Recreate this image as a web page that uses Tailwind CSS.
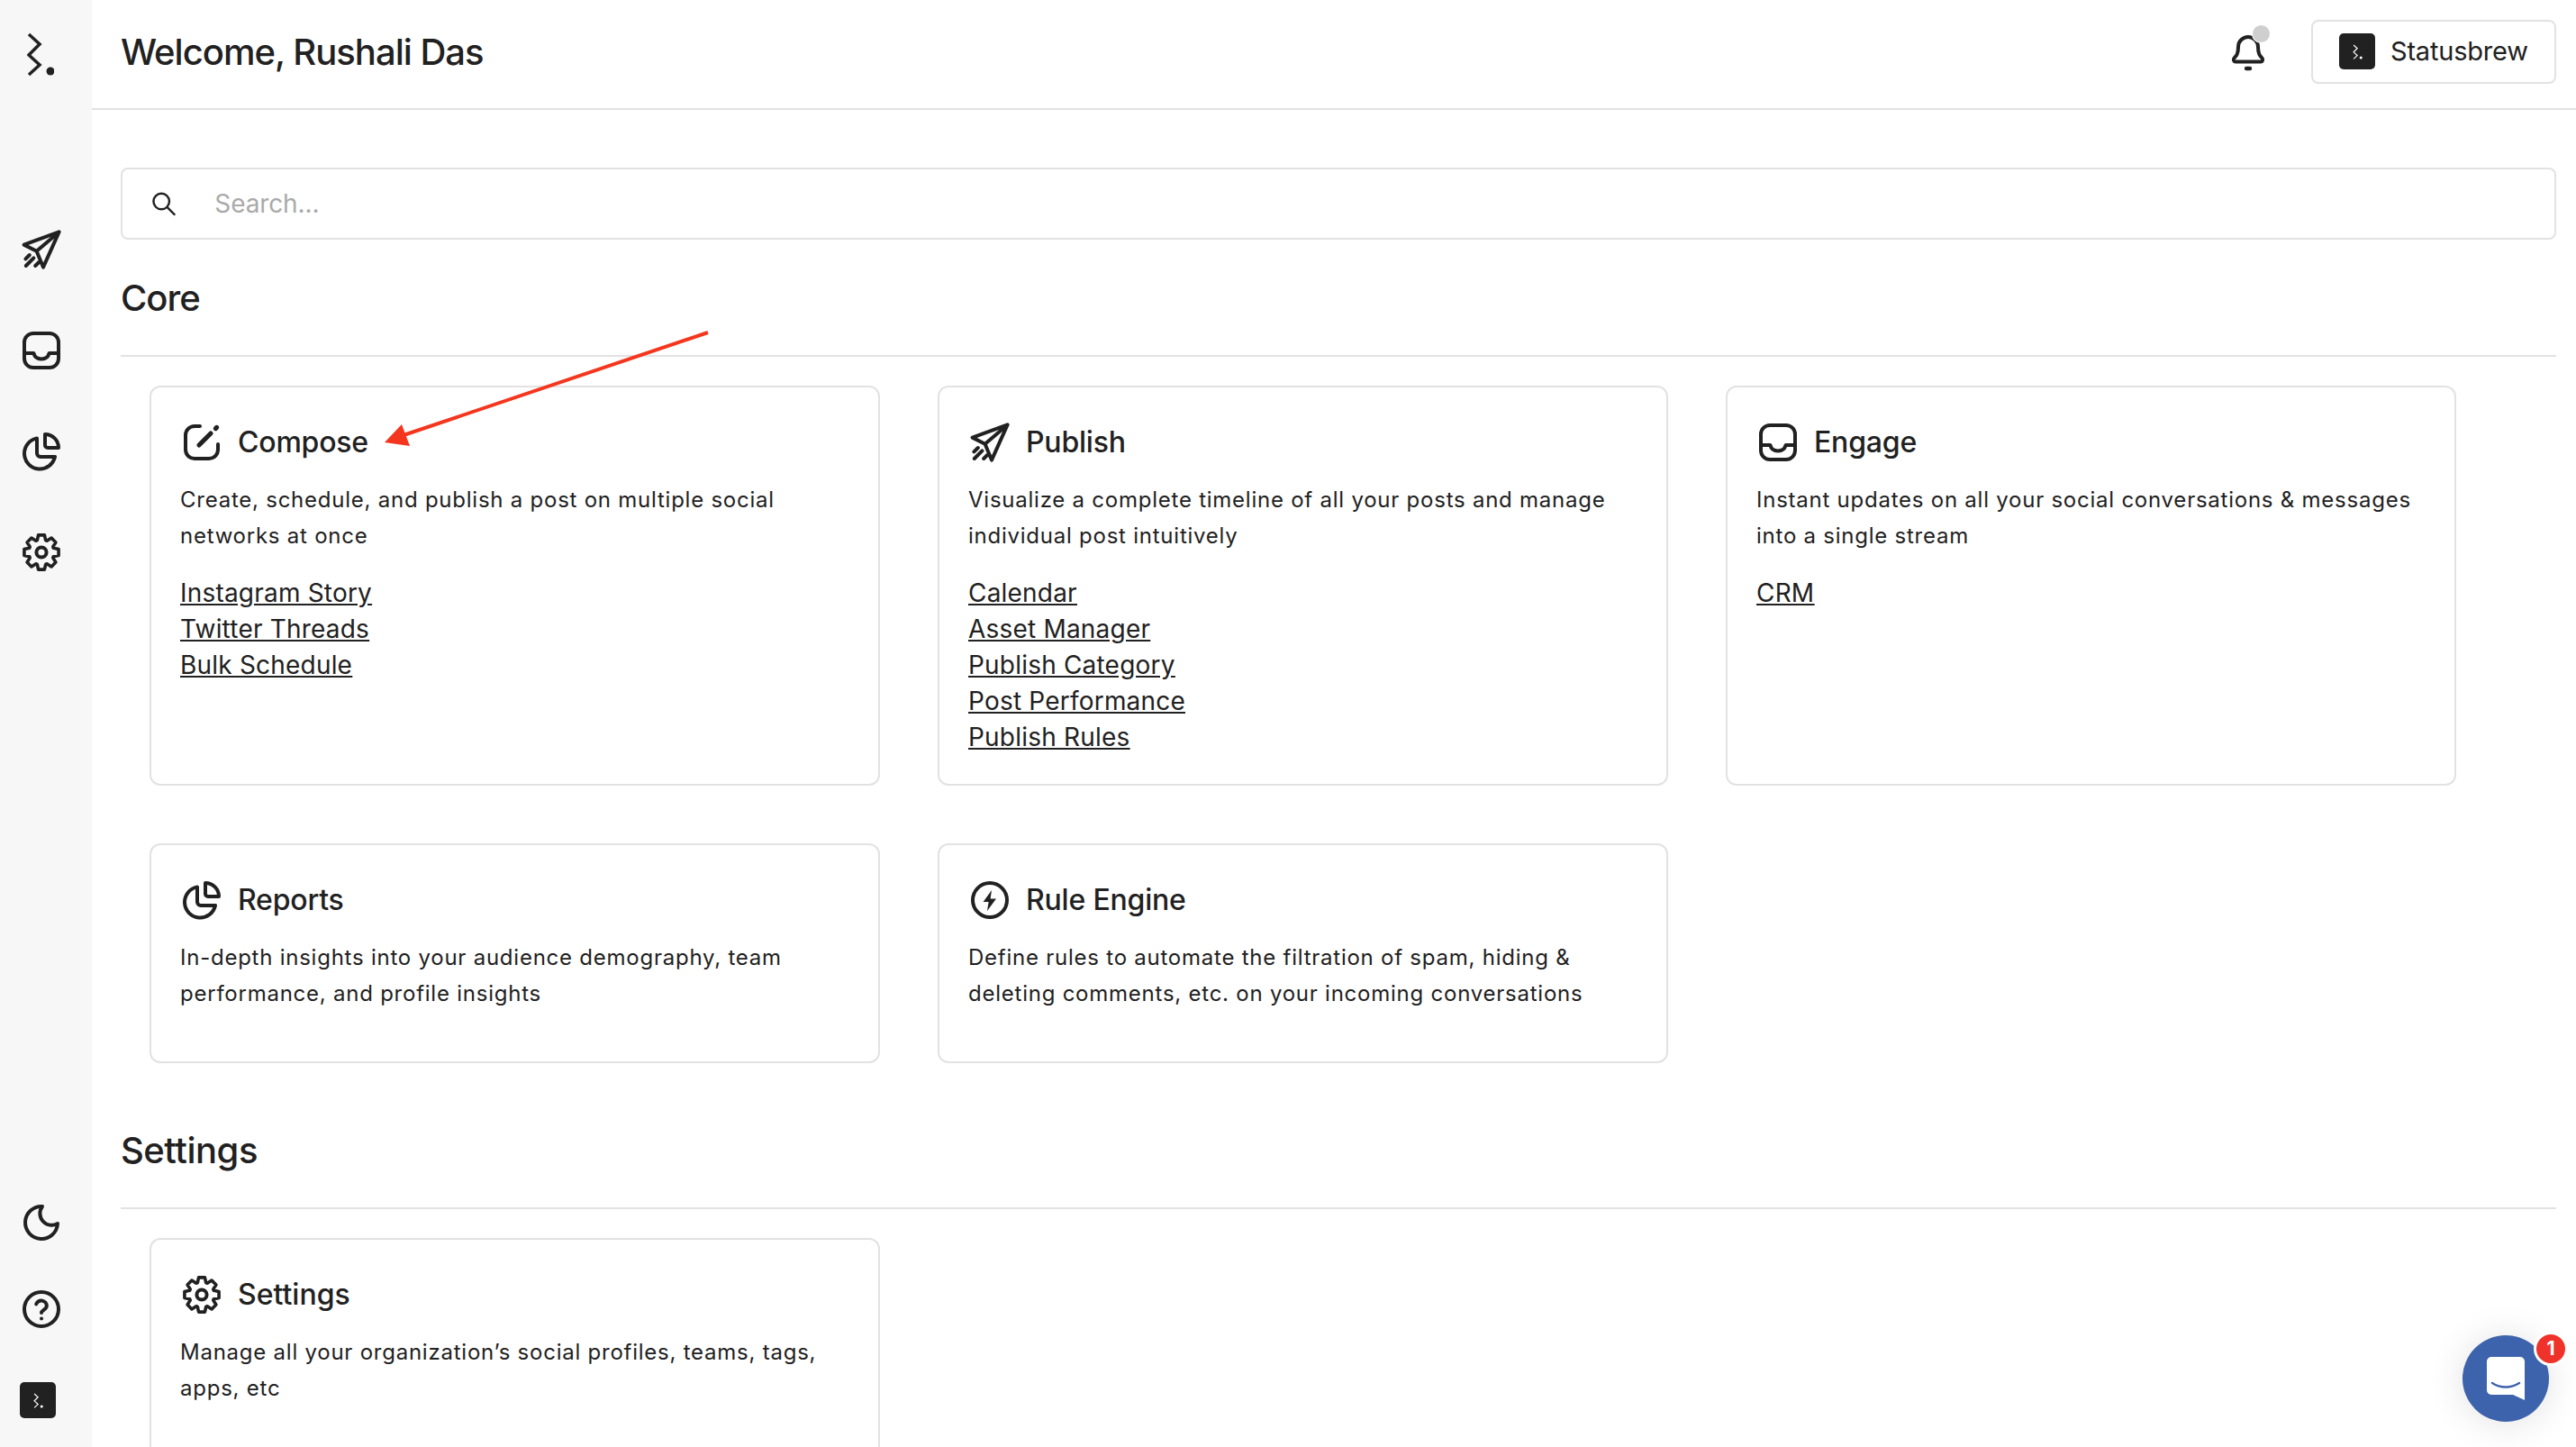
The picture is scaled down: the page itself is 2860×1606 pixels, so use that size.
<!DOCTYPE html>
<html lang="en">
<head>
    <meta charset="UTF-8">
    <title>Statusbrew | Home</title>
    <script src="https://cdn.jsdelivr.net/npm/@tailwindcss/browser@4"></script>
</head>
<body class="h-screen overflow-hidden bg-white font-['Inter',sans-serif] text-[#212121]">
    <!-- icon sheet -->
    <svg class="hidden">
        <defs>
            <symbol id="i-plane" viewBox="0 0 24 24"><path d="M21.8 2.2 2.3 9.3l7 3.6 3.7 8.9z M21.8 2.2 9.3 12.9 M3.2 17.2l2.2-2.2 M3.4 21l4.3-4.3 M8.6 21l2-2"/></symbol>
            <symbol id="i-inbox" viewBox="0 0 24 24"><rect x="2.5" y="2.5" width="19" height="19" rx="5"/><path d="M2.5 13.5h5.2c.5 2.2 2 3.2 4.3 3.2s3.800-1 4.300-3.200h5.200"/></symbol>
            <symbol id="i-pie" viewBox="0 0 24 24"><path d="M9.500 4.700a8.600 8.600 0 1 0 10 10.300h-8a2 2 0 0 1-2-2z"/><path d="M14 2.500v6a1.500 1.500 0 0 0 1.500 1.500h6a7.500 7.500 0 0 0-7.500-7.500z"/></symbol>
            <symbol id="i-gear" viewBox="0 0 24 24"><polygon transform="translate(12 12) scale(.9)" points="-2.600,-7.400 -1.900,-10.600 1.900,-10.600 2.600,-7.400 3.390,-7.070 6.150,-8.840 8.840,-6.150 7.070,-3.390 7.400,-2.600 10.600,-1.900 10.600,1.900 7.400,2.600 7.070,3.390 8.840,6.150 6.150,8.840 3.390,7.070 2.600,7.400 1.900,10.600 -1.900,10.600 -2.600,7.400 -3.390,7.070 -6.150,8.840 -8.840,6.150 -7.070,3.390 -7.400,2.600 -10.600,1.900 -10.600,-1.900 -7.400,-2.600 -7.070,-3.390 -8.840,-6.150 -6.150,-8.840 -3.390,-7.070"/><circle cx="12" cy="12" r="2.800"/></symbol>
            <symbol id="i-moon" viewBox="0 0 24 24"><path d="M12.500 3a6.500 6.500 0 0 0 8.500 9.500 9 9 0 1 1-8.500-9.500z"/></symbol>
            <symbol id="i-help" viewBox="0 0 24 24"><circle cx="12" cy="12" r="9.500"/><path d="M9.100 9.200a3 3 0 0 1 5.800 1c0 2-2.900 2.300-2.900 3.800"/><path d="M12 17.300h.01"/></symbol>
            <symbol id="i-compose" viewBox="0 0 24 24"><path d="M11 3H8a5 5 0 0 0-5 5v8a5 5 0 0 0 5 5h8a5 5 0 0 0 5-5v-3"/><path stroke-width="2.600" d="M10.500 13.500 17 7"/><path stroke-width="2.600" d="M19.700 4.300l.6-.6"/></symbol>
            <symbol id="i-bolt" viewBox="0 0 24 24"><circle cx="12" cy="12" r="9.500"/><path fill="currentColor" stroke="none" d="M13 6.500 8.300 13h3l-.8 5 5-6.700h-3.200z"/></symbol>
            <symbol id="i-logo" viewBox="0 0 30 50"><path d="M17 3 29 14 17 26 29 37 17 48" transform="translate(-15 0)" fill="none" stroke-linejoin="miter"/><circle cx="26" cy="44" r="4.500" fill="currentColor" stroke="none"/></symbol>
        </defs>
    </svg>

    <div class="flex h-full">
        <!-- SIDEBAR -->
        <aside class="flex w-[102px] shrink-0 flex-col items-start bg-[#f7f7f7] pl-[22px]">
            <svg class="mt-[35px] ml-[8px] h-[50px] w-[30px] fill-none stroke-current stroke-[3.500]"><use href="#i-logo"/></svg>
            <nav class="mt-[168px] flex flex-col gap-[64px]">
                <svg class="h-12 w-12 fill-none stroke-current stroke-2 [stroke-linecap:round] [stroke-linejoin:round]"><use href="#i-plane"/></svg>
                <svg class="h-12 w-12 fill-none stroke-current stroke-2 [stroke-linecap:round] [stroke-linejoin:round]"><use href="#i-inbox"/></svg>
                <svg class="h-12 w-12 fill-none stroke-current stroke-2 [stroke-linecap:round] [stroke-linejoin:round]"><use href="#i-pie"/></svg>
                <svg class="h-12 w-12 fill-none stroke-current stroke-2 [stroke-linecap:round] [stroke-linejoin:round]"><use href="#i-gear"/></svg>
            </nav>
            <div class="mt-auto flex flex-col items-start gap-[48px] pb-[32px]">
                <svg class="h-12 w-12 fill-none stroke-current stroke-2 [stroke-linecap:round] [stroke-linejoin:round]"><use href="#i-moon"/></svg>
                <svg class="h-12 w-12 fill-none stroke-current stroke-2 [stroke-linecap:round] [stroke-linejoin:round]"><use href="#i-help"/></svg>
                <div class="mt-[9px] flex h-10 w-10 items-center justify-center rounded-[5px] bg-[#212121] text-white">
                    <svg class="h-[17px] w-[11px] fill-none stroke-current stroke-[3.500]"><use href="#i-logo"/></svg>
                </div>
            </div>
        </aside>

        <div class="min-w-0 flex-1">
            <!-- HEADER -->
            <header class="flex h-[122px] items-center justify-between border-b-2 border-[#e2e2e2] pr-[22px] pb-[6px] pl-[32px]">
                <h1 class="mt-[2px] text-[40px] font-medium tracking-[-1px]">Welcome, Rushali Das</h1>
                <div class="flex items-center gap-[46px]">
                    <div class="relative -ml-[2px] -mt-[2px] h-12 w-12">
                        <svg class="h-12 w-12" viewBox="0 0 24 24" fill="none" stroke="currentColor" stroke-width="2" stroke-linecap="round" stroke-linejoin="round"><path d="M6.500 10a5.500 5.500 0 0 1 11 0c0 4 1 5 2.200 6.200.8.800.3 2-.7 2H5c-1 0-1.500-1.200-.7-2C5.500 15 6.500 14 6.500 10z"/><path stroke-width="2.200" d="M11 22h2"/></svg>
                        <span class="absolute top-[-4px] right-[0px] h-[19px] w-[19px] rounded-full bg-[#cfcfcf] ring-1 ring-white"></span>
                    </div>
                    <button class="flex h-[71px] w-[272px] items-center gap-[17px] rounded-lg border-2 border-[#e2e2e2] pl-[29px] text-[29px] tracking-[-.2px]">
                        <span class="flex h-10 w-10 items-center justify-center rounded-[5px] bg-[#212121] text-white">
                            <svg class="h-[17px] w-[11px] fill-none stroke-current stroke-[3.500]"><use href="#i-logo"/></svg>
                        </span>
                        Statusbrew
                    </button>
                </div>
            </header>

            <main class="pr-[22px] pl-[32px]">
                <!-- SEARCH -->
                <div class="mt-[64px] flex h-[80px] items-center rounded-lg border-2 border-[#e2e2e2] pl-[32px]">
                    <svg class="h-[28px] w-[28px]" viewBox="0 0 28 28" fill="none" stroke="currentColor" stroke-width="2.500"><circle cx="11.500" cy="11.500" r="9"/><path d="M18 18l9 9"/></svg>
                    <input class="ml-[43px] w-full bg-transparent text-[28px] tracking-[-.1px] outline-none placeholder:text-[#aaaaaa]" placeholder="Search...">
                </div>

                <!-- CORE -->
                <h2 class="mt-[35px] border-b-2 border-[#e2e2e2] pb-[33px] text-[40px] leading-[60px] font-medium tracking-[-1px]">Core</h2>
                <div class="grid grid-cols-3 gap-x-16 gap-y-[64px] pt-[32px] pr-[111px] pl-[32px]">
                    <section class="h-[444px] rounded-xl border-2 border-[#e2e2e2] px-[32px] pt-[37px]">
                        <div class="flex h-12 items-center gap-4 text-[32px] font-medium tracking-[-.2px]">
                            <svg class="h-12 w-12 fill-none stroke-current stroke-2 [stroke-linecap:round] [stroke-linejoin:round]"><use href="#i-compose"/></svg>Compose
                        </div>
                        <p class="mt-5 text-[24px] leading-[40px] tracking-[.76px]">Create, schedule, and publish a post on multiple social networks at once</p>
                        <div class="mt-[23px] flex flex-col items-start text-[28px] leading-[40px] tracking-[.2px] underline">
                            <a href="#">Instagram Story</a>
                            <a href="#">Twitter Threads</a>
                            <a href="#">Bulk Schedule</a>
                        </div>
                    </section>
                    <section class="h-[444px] rounded-xl border-2 border-[#e2e2e2] px-[32px] pt-[37px]">
                        <div class="flex h-12 items-center gap-4 text-[32px] font-medium tracking-[-.2px]">
                            <svg class="h-12 w-12 fill-none stroke-current stroke-2 [stroke-linecap:round] [stroke-linejoin:round]"><use href="#i-plane"/></svg>Publish
                        </div>
                        <p class="mt-5 text-[24px] leading-[40px] tracking-[.76px]">Visualize a complete timeline of all your posts and manage individual post intuitively</p>
                        <div class="mt-[23px] flex flex-col items-start text-[28px] leading-[40px] tracking-[.2px] underline">
                            <a href="#">Calendar</a>
                            <a href="#">Asset Manager</a>
                            <a href="#">Publish Category</a>
                            <a href="#">Post Performance</a>
                            <a href="#">Publish Rules</a>
                        </div>
                    </section>
                    <section class="h-[444px] rounded-xl border-2 border-[#e2e2e2] px-[32px] pt-[37px]">
                        <div class="flex h-12 items-center gap-4 text-[32px] font-medium tracking-[-.2px]">
                            <svg class="h-12 w-12 fill-none stroke-current stroke-2 [stroke-linecap:round] [stroke-linejoin:round]"><use href="#i-inbox"/></svg>Engage
                        </div>
                        <p class="mt-5 text-[24px] leading-[40px] tracking-[.76px]">Instant updates on all your social conversations &amp; messages into a single stream</p>
                        <div class="mt-[23px] flex flex-col items-start text-[28px] leading-[40px] tracking-[.2px] underline">
                            <a href="#">CRM</a>
                        </div>
                    </section>
                    <section class="h-[244px] rounded-xl border-2 border-[#e2e2e2] px-[32px] pt-[37px]">
                        <div class="flex h-12 items-center gap-4 text-[32px] font-medium tracking-[-.2px]">
                            <svg class="h-12 w-12 fill-none stroke-current stroke-2 [stroke-linecap:round] [stroke-linejoin:round]"><use href="#i-pie"/></svg>Reports
                        </div>
                        <p class="mt-5 text-[24px] leading-[40px] tracking-[.76px]">In-depth insights into your audience demography, team performance, and profile insights</p>
                    </section>
                    <section class="h-[244px] rounded-xl border-2 border-[#e2e2e2] px-[32px] pt-[37px]">
                        <div class="flex h-12 items-center gap-4 text-[32px] font-medium tracking-[-.2px]">
                            <svg class="h-12 w-12 fill-none stroke-current stroke-2 [stroke-linecap:round] [stroke-linejoin:round]"><use href="#i-bolt"/></svg>Rule Engine
                        </div>
                        <p class="mt-5 text-[24px] leading-[40px] tracking-[.76px]">Define rules to automate the filtration of spam, hiding &amp; deleting comments, etc. on your incoming conversations</p>
                    </section>
                </div>

                <!-- SETTINGS -->
                <h2 class="mt-[67px] border-b-2 border-[#e2e2e2] pb-[33px] text-[40px] leading-[60px] font-medium tracking-[-.5px]">Settings</h2>
                <div class="grid grid-cols-3 gap-x-16 pt-[32px] pr-[111px] pl-[32px]">
                    <section class="h-[300px] rounded-xl border-2 border-[#e2e2e2] px-[32px] pt-[37px]">
                        <div class="flex h-12 items-center gap-4 text-[32px] font-medium">
                            <svg class="h-12 w-12 fill-none stroke-current stroke-2 [stroke-linecap:round] [stroke-linejoin:round]"><use href="#i-gear"/></svg>Settings
                        </div>
                        <p class="mt-5 text-[24px] leading-[40px] tracking-[.76px]">Manage all your organization’s social profiles, teams, tags, apps, etc</p>
                    </section>
                </div>
            </main>
        </div>
    </div>

    <!-- annotation arrow -->
    <svg class="absolute top-0 left-0 h-[600px] w-[900px]" viewBox="0 0 900 600">
        <path d="M786 369 445 484" stroke="#f4361f" stroke-width="4" fill="none"/>
        <path d="M427 491 446 471 455 495z" fill="#f4361f"/>
    </svg>

    <!-- chat launcher -->
    <div class="absolute top-[1482px] left-[2734px] flex h-[96px] w-[96px] items-center justify-center rounded-full bg-[#3c63ab] shadow-[0_2px_40px_rgba(0,0,0,.12)]">
        <svg class="h-[50px] w-[44px]" viewBox="0 0 44 50"><path d="M6 1h32a5 5 0 0 1 5 5v43l-13-6H6a5 5 0 0 1-5-5V6a5 5 0 0 1 5-5z" fill="#fff"/><path d="M7 30c9 6 21 6 30 0" fill="none" stroke="#3c63ab" stroke-width="2.500" stroke-linecap="round"/></svg>
    </div>
    <div class="absolute top-[1478px] left-[2813px] flex h-[38px] w-[38px] items-center justify-center rounded-full border-[3px] border-white bg-[#f0332a] text-[21px] font-bold text-white">1</div>
</body>
</html>
